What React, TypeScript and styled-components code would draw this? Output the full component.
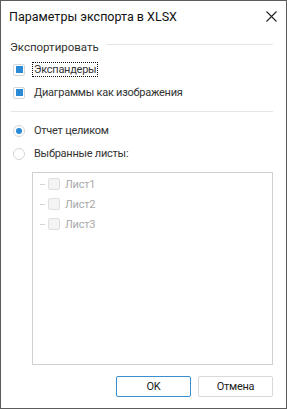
import React from "react";
import styled, { createGlobalStyle } from "styled-components";

const GlobalStyle = createGlobalStyle`
  html, body { margin: 0; padding: 0; background: #ffffff; }
  body { font-family: Roboto, "Noto Sans", sans-serif; }
  * { box-sizing: border-box; }
`;

const Window = styled.div`
  width: 287px;
  height: 409px;
  border: 1px solid #5c5c5c;
  background: #ffffff;
  display: flex;
  flex-direction: column;
  font-size: 11px;
  letter-spacing: -0.25px;
  color: #222222;
`;

const TitleBar = styled.div`
  height: 30px;
  display: flex;
  align-items: center;
  justify-content: space-between;
  padding: 0 9px 0 8px;
`;

const Title = styled.div`
  font-size: 12.5px;
  letter-spacing: 0;
  color: #111111;
`;

const CloseButton = styled.div`
  width: 12px;
  height: 12px;
  display: flex;
  align-items: center;
  justify-content: center;
`;

const Body = styled.div`
  flex: 1;
  display: flex;
  flex-direction: column;
  padding: 0 13px 0 9px;
`;

const GroupHeader = styled.div`
  height: 22px;
  margin-top: 5px;
  display: flex;
  align-items: center;
  gap: 7px;
  color: #333333;
`;

const HeaderText = styled.span`
  letter-spacing: 0;
  font-size: 11.5px;
`;

const HeaderLine = styled.div`
  flex: 1;
  height: 1px;
  background: #e6e6e6;
  margin-top: -5px;
`;

const OptionRow = styled.div`
  height: 23px;
  display: flex;
  align-items: center;
  padding-left: 3px;
  gap: 8px;
  color: #333333;
`;

const Box = styled.div<{ $disabled?: boolean }>`
  width: 12px;
  height: 12px;
  border: 1px solid ${(p) => (p.$disabled ? "#e0e0e0" : "#d6d6d6")};
  background: ${(p) => (p.$disabled ? "#f4f4f4" : "#ffffff")};
  border-radius: 2px;
  display: flex;
  align-items: center;
  justify-content: center;
  flex: none;
`;

const Mark = styled.div`
  width: 7px;
  height: 7px;
  background: #2a8ad6;
`;

const Radio = styled.div`
  width: 12px;
  height: 12px;
  border: 1px solid #d6d6d6;
  border-radius: 50%;
  display: flex;
  align-items: center;
  justify-content: center;
  flex: none;
`;

const Dot = styled.div`
  width: 6px;
  height: 6px;
  border-radius: 50%;
  background: #2a8ad6;
`;

const FocusLabel = styled.span<{ $focused?: boolean }>`
  padding: 0 1px;
  line-height: 13px;
  outline: ${(p) => (p.$focused ? "1px dotted #111" : "none")};
  outline-offset: 0px;
`;

const Separator = styled.div`
  height: 1px;
  background: #e6e6e6;
  margin: 7px 0 7px 1px;
`;

const ListBox = styled.div`
  margin: 7px 0 0 22px;
  height: 193px;
  border: 1px solid #d0d0d0;
  padding-top: 1px;
  display: flex;
  flex-direction: column;
`;

const ListItem = styled.div`
  height: 20px;
  display: flex;
  align-items: center;
  padding-left: 7px;
  color: #a8a8a8;
`;

const Dash = styled.div`
  width: 5px;
  height: 1px;
  background: #d4d4d4;
  margin-right: 3px;
`;

const ItemLabel = styled.span`
  margin-left: 5px;
`;

const ButtonRow = styled.div`
  margin-top: 11px;
  display: flex;
  justify-content: flex-end;
  gap: 7px;
`;

const Button = styled.button<{ $primary?: boolean }>`
  width: 75px;
  height: 21px;
  border: 1px solid ${(p) => (p.$primary ? "#3a8fd1" : "#d9d9d9")};
  border-radius: 2px;
  background: #ffffff;
  font-family: inherit;
  font-size: 11px;
  letter-spacing: -0.25px;
  color: #222222;
  padding: 0;
`;

export default function App() {
  return (
    <>
      <GlobalStyle />
      <Window>
        <TitleBar>
          <Title>Параметры экспорта в XLSX</Title>
          <CloseButton>
            <svg width="11" height="11" viewBox="0 0 11 11">
              <path d="M0.5 0.5 L10.5 10.5 M10.5 0.5 L0.5 10.5" stroke="#222" strokeWidth="1.1" />
            </svg>
          </CloseButton>
        </TitleBar>
        <Body>
          <GroupHeader>
            <HeaderText>Экспортировать</HeaderText>
            <HeaderLine />
          </GroupHeader>
          <OptionRow>
            <Box><Mark /></Box>
            <FocusLabel $focused>Экспандеры</FocusLabel>
          </OptionRow>
          <OptionRow>
            <Box><Mark /></Box>
            <FocusLabel>Диаграммы как изображения</FocusLabel>
          </OptionRow>
          <Separator />
          <OptionRow>
            <Radio><Dot /></Radio>
            <FocusLabel>Отчет целиком</FocusLabel>
          </OptionRow>
          <OptionRow>
            <Radio />
            <FocusLabel>Выбранные листы:</FocusLabel>
          </OptionRow>
          <ListBox>
            {["Лист1", "Лист2", "Лист3"].map((name) => (
              <ListItem key={name}>
                <Dash />
                <Box $disabled />
                <ItemLabel>{name}</ItemLabel>
              </ListItem>
            ))}
          </ListBox>
          <ButtonRow>
            <Button $primary>OK</Button>
            <Button>Отмена</Button>
          </ButtonRow>
        </Body>
      </Window>
    </>
  );
}
